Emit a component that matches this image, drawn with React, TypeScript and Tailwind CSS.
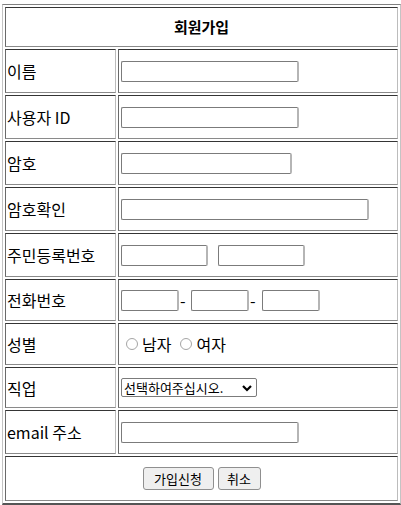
const cell =
  "border border-t-[#353535] border-l-[#6a6a6a] border-b-[#8a8a8a] border-r-[#bcbcbc] p-px align-middle";
const label = cell + " w-[111px] text-left text-[16px] leading-[20px] pl-[1px]";
const value = cell + " text-left";
const field =
  "block h-[21px] rounded-[2px] border border-[#7b7b7b] border-r-2 border-r-[#b5b5b5] bg-white outline-none";
const radio =
  "m-0 h-[12px] w-[12px] appearance-none rounded-full border border-[#a5a5a5] bg-white";
const button =
  "h-[23px] rounded-[3px] border border-[#8f8f8f] bg-[#efefef] text-[13px] leading-[20px] text-black";

function Row({ name, h, children }: { name: string; h: string; children: React.ReactNode }) {
  return (
    <tr>
      <td className={label + " " + h}>{name}</td>
      <td className={value + " " + h}>{children}</td>
    </tr>
  );
}

export default function App() {
  return (
    <div className="min-h-[505px] bg-white pl-[2px] pt-[4px] font-['Noto_Sans_CJK_KR','Noto_Sans',sans-serif] text-black">
      <table className="w-[399px] border-separate border-spacing-[2px] border-t border-l border-r border-b-2 border-t-[#808080] border-l-[#c4c4c4] border-r-[#c4c4c4] border-b-[#555555]">
        <tbody>
          <tr>
            <td colSpan={2} className={cell + " h-[40px] text-center text-[15px] font-bold"}>
              회원가입
            </td>
          </tr>
          <Row name="이름" h="h-[44px]">
            <input className={field + " ml-px w-[178px]"} />
          </Row>
          <Row name="사용자 ID" h="h-[44px]">
            <input className={field + " ml-px w-[178px]"} />
          </Row>
          <Row name="암호" h="h-[44px]">
            <input type="password" className={field + " ml-px w-[171px]"} />
          </Row>
          <Row name="암호확인" h="h-[44px]">
            <input type="password" className={field + " ml-px w-[248px]"} />
          </Row>
          <Row name="주민등록번호" h="h-[44px]">
            <div className="ml-px flex items-center gap-[10px]">
              <input className={field + " w-[87px]"} />
              <input className={field + " w-[87px]"} />
            </div>
          </Row>
          <Row name="전화번호" h="h-[42px]">
            <div className="ml-px flex items-center text-[16px]">
              <input className={field + " w-[58px]"} />
              <span className="w-[12px] pl-[1px] leading-[20px]">-</span>
              <input className={field + " w-[58px]"} />
              <span className="w-[13px] pl-[1px] leading-[20px]">-</span>
              <input className={field + " w-[58px]"} />
            </div>
          </Row>
          <Row name="성별" h="h-[42px]">
            <div className="flex items-center pl-[6px] text-[16px] leading-[20px]">
              <label className="flex items-center gap-[4px]">
                <input type="radio" name="gender" className={radio} />
                남자
              </label>
              <label className="ml-[9px] flex items-center gap-[4px]">
                <input type="radio" name="gender" className={radio} />
                여자
              </label>
            </div>
          </Row>
          <Row name="직업" h="h-[41px]">
            <div className="relative ml-px w-[136px]">
              <select className="block h-[19px] w-[136px] appearance-none rounded-[2px] border border-[#7b7b7b] bg-white pl-[2px] pr-[18px] text-[13px] leading-[16px] outline-none">
                <option>선택하여주십시오.</option>
                <option>학생</option>
                <option>회사원</option>
                <option>기타</option>
              </select>
              <svg
                className="pointer-events-none absolute right-[5px] top-[6px] h-[8px] w-[10px]"
                viewBox="0 0 10 8"
                fill="none"
                stroke="black"
                strokeWidth="2.2">
                <path d="M1 2l4 4 4-4" />
              </svg>
            </div>
          </Row>
          <Row name="email 주소" h="h-[44px]">
            <input type="email" className={field + " ml-px w-[178px]"} />
          </Row>
          <tr>
            <td colSpan={2} className={cell + " h-[45px] text-center"}>
              <div className="flex items-center justify-center gap-[4px]">
                <button className={button + " w-[71px]"}>가입신청</button>
                <button className={button + " w-[43px]"}>취소</button>
              </div>
            </td>
          </tr>
        </tbody>
      </table>
    </div>
  );
}
